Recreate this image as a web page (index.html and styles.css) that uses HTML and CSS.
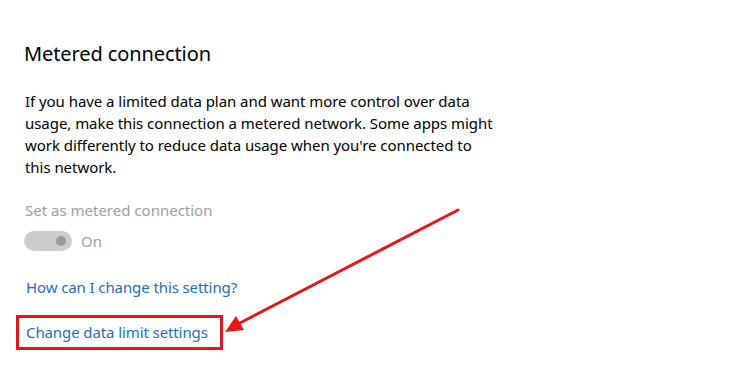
FILE: index.html
```html
<!DOCTYPE html>
<html>
<head>
<meta charset="utf-8">
<link rel="stylesheet" href="styles.css">
</head>
<body>
<div class="page">
  <h2 class="title">Metered connection</h2>
  <p class="desc">If you have a limited data plan and want more control over data<br>usage, make this connection a metered network. Some apps might<br>work differently to reduce data usage when you're connected to<br>this network.</p>
  <div class="label">Set as metered connection</div>
  <div class="toggle-row">
    <span class="toggle"><span class="knob"></span></span>
    <span class="state">On</span>
  </div>
  <a class="link first">How can I change this setting?</a>
  <div class="highlight"><a class="link">Change data limit settings</a></div>
  <svg class="arrow" width="750" height="375" viewBox="0 0 750 375">
    <line x1="458" y1="210" x2="236" y2="325" stroke="#e8141b" stroke-width="3" stroke-linecap="round"/>
    <polygon points="225,332 236,316 244,330" fill="#e8141b"/>
  </svg>
</div>
</body>
</html>
```
FILE: styles.css
```css
html, body {
  margin: 0;
  padding: 0;
  background: #ffffff;
}
.page {
  position: relative;
  width: 750px;
  height: 375px;
  box-sizing: border-box;
  padding: 40px 0 0 24px;
  font-family: "Noto Sans", "Open Sans", sans-serif;
  color: #000;
}
.title {
  margin: 0;
  font-size: 20px;
  font-weight: 400;
  line-height: 28px;
  letter-spacing: -0.1px;
}
.desc {
  margin: 22px 0 0 1px;
  font-size: 15px;
  line-height: 22px;
  letter-spacing: -0.05px;
}
.label {
  margin: 21px 0 0 1px;
  font-size: 15px;
  line-height: 22px;
  color: #a0a0a0;
}
.toggle-row {
  display: flex;
  align-items: center;
  gap: 9px;
  margin-top: 9px;
}
.toggle {
  position: relative;
  display: inline-block;
  width: 48px;
  height: 20px;
  border-radius: 10px;
  background: #cccccc;
}
.knob {
  position: absolute;
  top: 5px;
  right: 6px;
  width: 10px;
  height: 10px;
  border-radius: 50%;
  background: #999999;
}
.state {
  font-size: 15px;
  color: #a0a0a0;
  line-height: 22px;
}
.link {
  display: block;
  font-size: 15px;
  line-height: 22px;
  color: #1a6fc2;
  text-decoration: none;
  letter-spacing: -0.1px;
}
.first {
  margin: 24px 0 0 2px;
}
.highlight {
  display: inline-block;
  margin: 17px 0 0 -8px;
  padding: 3px 12px 4px 7px;
  border: 3px solid #e8141b;
}
.arrow {
  position: absolute;
  left: 0;
  top: 0;
  pointer-events: none;
}
```
